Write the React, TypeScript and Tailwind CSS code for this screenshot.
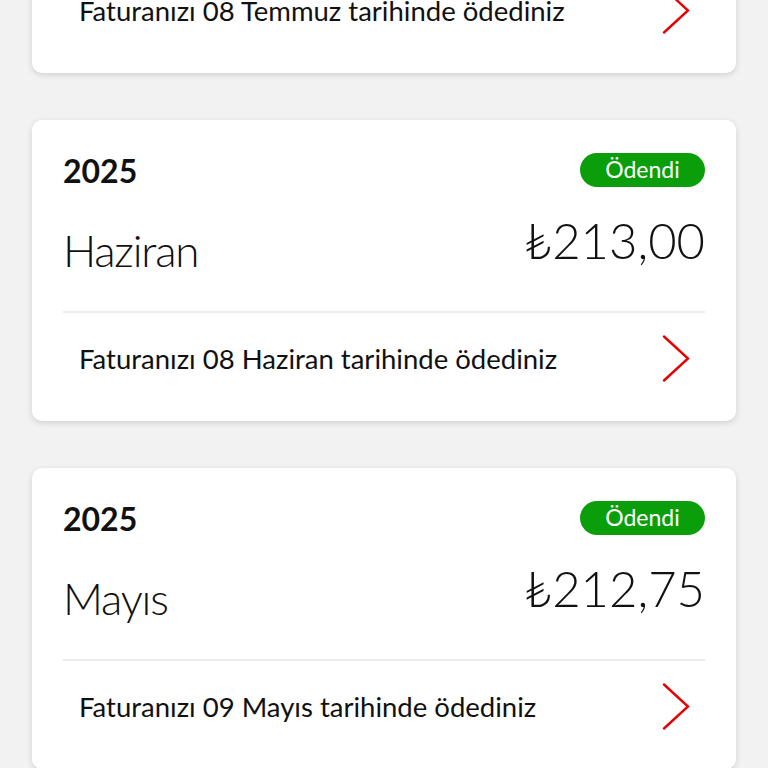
import React from "react";

type Bill = {
  year: string;
  month: string;
  amount: string;
  paidNote: string;
};

const bills: Bill[] = [
  { year: "2025", month: "Temmuz", amount: "₺213,00", paidNote: "Faturanızı 08 Temmuz tarihinde ödediniz" },
  { year: "2025", month: "Haziran", amount: "₺213,00", paidNote: "Faturanızı 08 Haziran tarihinde ödediniz" },
  { year: "2025", month: "Mayıs", amount: "₺212,75", paidNote: "Faturanızı 09 Mayıs tarihinde ödediniz" },
];

function Chevron() {
  return (
    <svg width="30" height="48" viewBox="0 0 30 48" fill="none" className="shrink-0">
      <polyline
        points="3,1.5 27,23.5 3,45.5"
        stroke="#e60000"
        strokeWidth="2.4"
        strokeLinecap="round"
        strokeLinejoin="miter"
      />
    </svg>
  );
}

function BillCard({ bill }: { bill: Bill }) {
  return (
    <div className="rounded-[10px] bg-white px-[31px] shadow-[0_2px_6px_rgba(0,0,0,0.14)]">
      {/* Year + status */}
      <div className="flex items-center justify-between pt-[32px]">
        <span className="mt-[3px] text-[32px] font-bold leading-none text-[#111]">{bill.year}</span>
        <span className="flex h-[34px] w-[125px] items-center justify-center rounded-full bg-[#0a9e0a] text-[23px] leading-none text-white">
          Ödendi
        </span>
      </div>

      {/* Month + amount */}
      <div className="flex h-[124px] items-start justify-between">
        <span className="mt-[41px] text-[44px] font-light leading-none tracking-[-1.2px] text-[#111]">
          {bill.month}
        </span>
        <span className="mt-[29px] text-[49px] font-light leading-none text-[#111]">{bill.amount}</span>
      </div>

      <div className="h-[2px] bg-[#ebebeb]" />

      {/* Paid note */}
      <div className="flex h-[108px] items-center justify-between pb-[16px] pl-[16px] pr-[14px]">
        <span className="text-[27.5px] leading-none text-[#111]">{bill.paidNote}</span>
        <Chevron />
      </div>
    </div>
  );
}

export default function App() {
  return (
    <div
      className="h-[768px] overflow-hidden bg-[#f2f2f2]"
      style={{ fontFamily: "Lato, 'Open Sans', sans-serif" }}
    >
      <div className="-mt-[228px] flex flex-col gap-[47px] px-[32px]">
        {bills.map((b) => (
          <BillCard key={b.month} bill={b} />
        ))}
      </div>
    </div>
  );
}
